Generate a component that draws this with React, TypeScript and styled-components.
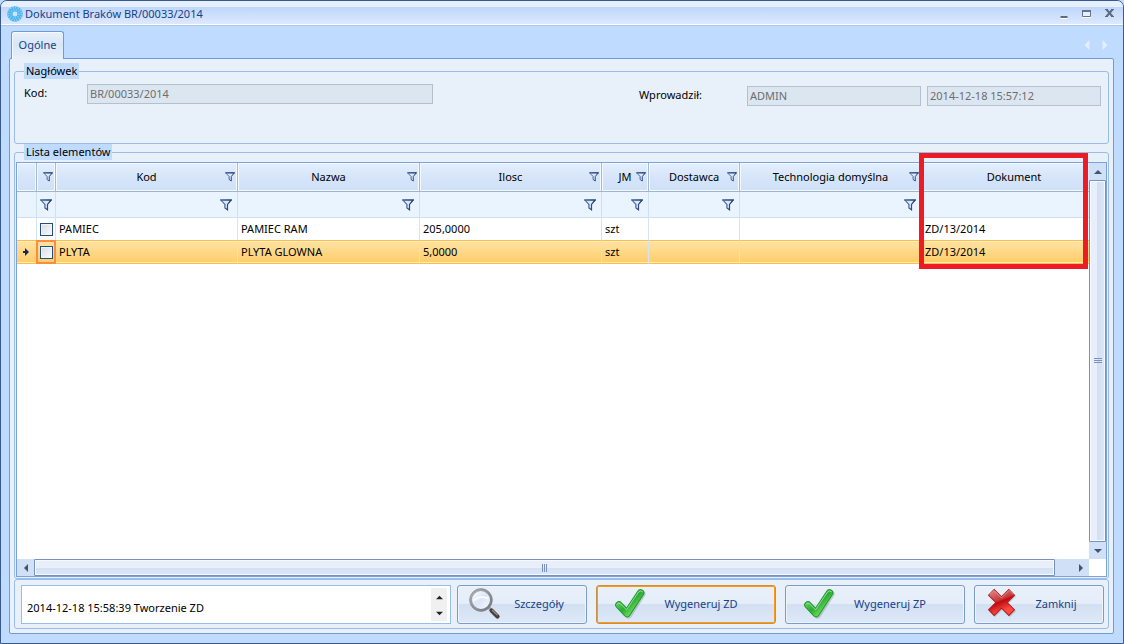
import React from "react";
import styled, { createGlobalStyle } from "styled-components";

const GlobalStyle = createGlobalStyle`
  *, *::before, *::after { box-sizing: border-box; }
  body {
    margin: 0;
    background: #bfdbff;
    color: #000;
    font: 11px/16px "Noto Sans", "Open Sans", sans-serif;
  }
  button, input, textarea { font: inherit; color: inherit; margin: 0; }
  button { padding: 0; border: 0; background: none; }
  svg { display: block; flex: none; }
`;

const Window = styled.div`
  display: flex;
  flex-direction: column;
  min-height: 100vh;
  border: 1px solid #3b5a8c;
  border-radius: 7px 7px 0 0;
  overflow: hidden;
  background: #bfdbff;
`;

const TitleBar = styled.header`
  display: flex;
  align-items: center;
  gap: 2px;
  height: 25px;
  padding: 2px 7px 0 6px;
  border-bottom: 1px solid #a9c7f0;
  box-shadow: inset 0 -1px #fff;
  background: linear-gradient(#e6effc 0 6px, #bfd6fb 6px, #dfeafd 24px);
  color: #15428b;
`;

const Title = styled.h1`
  flex: 1;
  margin: 0;
  font-size: 11px;
  font-weight: 400;
`;

const WindowButtons = styled.div`
  display: flex;
  gap: 11px;
`;

const TabBar = styled.nav`
  display: flex;
  align-items: flex-end;
  justify-content: space-between;
  height: 32px;
  padding: 0 13px 0 10px;
`;

const Tab = styled.button`
  position: relative;
  z-index: 1;
  width: 53px;
  height: 28px;
  margin-bottom: -1px;
  padding-bottom: 2px;
  border: 1px solid #6f9bd8;
  border-bottom: 0;
  border-radius: 3px 3px 0 0;
  background: linear-gradient(#e9f1fb, #d9e6f7 45%, #e8f0fa);
  box-shadow: inset 1px 1px #f6faff;
  color: #15428b;
`;

const TabArrows = styled.div`
  display: flex;
  gap: 8px;
  margin-bottom: 8px;
`;

const Body = styled.main`
  flex: 1;
  display: flex;
  flex-direction: column;
  margin: 0 9px 9px 8px;
  padding: 4px;
  border: 1px solid #6f9bd8;
  border-radius: 2px;
  background: #e8f0fa;
`;

const Group = styled.section<{ $fill?: boolean }>`
  display: flex;
  flex-direction: column;
  flex: ${(p) => (p.$fill ? "1" : "none")};
  min-width: 0;
  margin-top: 8px;
  padding: ${(p) => (p.$fill ? "0 1px 1px" : "0 7px 37px 9px")};
  border: 1px solid #9bbce8;
  border-radius: 3px;
`;

const Legend = styled.h2<{ $inset?: boolean }>`
  align-self: flex-start;
  margin: -9px 0 0 ${(p) => (p.$inset ? "8px" : "0")};
  padding: 0 2px;
  background: #bfdbff;
  font-size: 11px;
  font-weight: 400;
`;

const Fields = styled.div`
  display: flex;
  align-items: flex-start;
  justify-content: space-between;
  gap: 24px;
  margin-top: 5px;
`;

const Field = styled.div<{ $lowered?: boolean }>`
  display: flex;
  align-items: center;
  gap: 6px;
  padding-top: ${(p) => (p.$lowered ? "2px" : "0")};
`;

const Label = styled.label<{ $width: number }>`
  width: ${(p) => p.$width}px;
  padding-bottom: 2px;
`;

const TextBox = styled.input<{ $width: number }>`
  width: ${(p) => p.$width}px;
  height: 20px;
  padding: 0 2px 1px;
  border: 1px solid #b4c0cd;
  border-radius: 0;
  background: #dce6f0;
  color: #6d6d6d;
  outline: none;
`;

const Grid = styled.div`
  position: relative;
  flex: 1;
  display: flex;
  flex-direction: column;
  margin-top: 2px;
  border: 1px solid #7ba2da;
  background: #fff;
`;

const GridRow = styled.div<{ $fill?: boolean }>`
  display: flex;
  flex: ${(p) => (p.$fill ? "1" : "none")};
`;

const Viewport = styled.div`
  flex: 1;
  min-width: 0;
  overflow: hidden;
`;

const Table = styled.table`
  width: calc(100% + 18px);
  table-layout: fixed;
  border-collapse: separate;
  border-spacing: 0;
`;

const HeadCell = styled.th`
  height: 29px;
  padding: 0;
  border-right: 1px solid #a3b9d6;
  border-bottom: 1px solid #9fb4cf;
  background: linear-gradient(#e4effd, #d6e5fa 50%, #cfe0f8);
  box-shadow: inset 1px 1px #f4f9ff, inset -1px -1px #f4f9ff;
  font-weight: 400;
`;

const HeadContent = styled.div`
  display: grid;
  grid-template-columns: 1fr auto 1fr;
  align-items: center;
  padding: 0 2px;

  button { grid-column: 3; justify-self: end; }
  span { grid-column: 2; }
`;

const FilterCell = styled.td`
  height: 26px;
  padding: 0 5px 0 3px;
  border-right: 1px solid #cfdff5;
  border-bottom: 1px solid #cfdff5;
  background: #eaf4ff;
`;

const FilterButton = styled.button`
  display: block;
  margin-left: auto;
`;

const Cell = styled.td<{ $selected?: boolean; $focused?: boolean }>`
  height: ${(p) => (p.$selected ? "24px" : "22px")};
  padding: 0 3px;
  border-right: 1px solid #d5e3f5;
  white-space: nowrap;
  ${(p) =>
    p.$selected &&
    `
    border-top: 1px solid #fdb95a;
    border-bottom: 1px solid #fdb95a;
    background: linear-gradient(#ffe3a4, #ffcd68);
    box-shadow: inset 0 1px #fff0a8, inset 0 -1px #fff0a8;
  `}
  ${(p) =>
    p.$focused &&
    `
    border: 2px solid #ff8c3c;
    border-left-width: 1px;
    box-shadow: -1px 0 #ff8c3c;
    padding: 0 2px;
  `}
`;

const CheckBox = styled.input`
  appearance: none;
  display: block;
  width: 13px;
  height: 13px;
  margin: 0;
  border: 1px solid #1c5180;
  background: linear-gradient(135deg, #d8dce3, #fafbfc);
  box-shadow: inset 0 0 0 1px #f4f4f4;
`;

const Highlight = styled.div`
  position: absolute;
  top: -10px;
  left: 902px;
  right: 18px;
  height: 116px;
  border: 5px solid #ed1c24;
  pointer-events: none;
`;

const VScroll = styled.div`
  display: flex;
  flex-direction: column;
  width: 17px;
  background: #d0e0f6;
`;

const HScroll = styled.div`
  display: flex;
  flex: 1;
  height: 17px;
  background: #d0e0f6;
`;

const ScrollButton = styled.button`
  display: flex;
  align-items: center;
  justify-content: center;
  flex: none;
  width: 17px;
  height: 17px;
`;

const Thumb = styled.div<{ $vertical?: boolean }>`
  display: flex;
  align-items: center;
  justify-content: center;
  flex: 1;
  margin-right: ${(p) => (p.$vertical ? "0" : "17px")};
  border: 1px solid #7793bd;
  border-radius: 1px;
  box-shadow: inset 0 0 0 1px #f5f9ff;
  background: linear-gradient(${(p) => (p.$vertical ? "to right" : "to bottom")}, #e8effa 50%, #d3e0f2 50%, #dde8f7);
`;

const Corner = styled.div`
  width: 17px;
  background: #fff;
`;

const Footer = styled.footer`
  display: flex;
  gap: 9px;
  padding: 5px 4px 4px 6px;
  border: 1px solid #9bbce8;
  border-radius: 3px;
`;

const LogBox = styled.div`
  display: flex;
  flex: 1;
  min-width: 0;
  height: 39px;
  margin-right: -3px;
  border: 1px solid #9bbce8;
  background: #fff;
`;

const LogText = styled.textarea`
  flex: 1;
  min-width: 0;
  padding: 14px 5px 0;
  border: 0;
  outline: none;
  resize: none;
  overflow: hidden;
  background: transparent;
`;

const Spinner = styled.div`
  display: flex;
  flex-direction: column;
  width: 16px;
  margin: 2px 3px 2px 0;
  padding-top: 2px;
  background: #f0f0f0;

  button { flex: 1; display: flex; align-items: center; justify-content: center; }
`;

const ActionButton = styled.button<{ $wide?: boolean; $active?: boolean }>`
  display: flex;
  align-items: center;
  flex: none;
  width: ${(p) => (p.$wide ? "180px" : "130px")};
  height: 39px;
  padding: 0 ${(p) => (p.$wide ? "19px 2px 17px" : "9px 2px 11px")};
  border: 1px solid ${(p) => (p.$active ? "#c98f45" : "#7b9bc8")};
  border-radius: 3px;
  background: linear-gradient(#e9f0fa, #e4edf9 50%, #d2e0f2 50%, #dde9f8);
  box-shadow: inset 0 0 0 1px ${(p) => (p.$active ? "#ff9a10" : "#eef4fc")};
  color: #15428b;

  span { flex: 1; text-align: center; }
`;

const Funnel = ({ size }: { size: number }) => (
  <svg width={size} height={size} viewBox="0 0 12 12">
    <defs>
      <linearGradient id="funnel" x1="0" x2="1">
        <stop offset="0" stopColor="#5f86c0" />
        <stop offset="1" stopColor="#14285c" />
      </linearGradient>
    </defs>
    <path d="M.8 1h10.400L7.500 5.400v5.400L4.900 9V5.400Z" fill="#dbe8fa" stroke="url(#funnel)" strokeWidth="1.200" />
    <path d="M.3 1h11.400" stroke="#2b4a80" strokeWidth="1.200" />
  </svg>
);

const arrows = {
  up: "M0 6 4 2l4 4Z",
  down: "M0 2h8L4 6Z",
  left: "M6 0v8L2 4Z",
  right: "M2 0v8l4-4Z",
};

const Arrow = ({ dir, color = "#44536e", size = 8 }: { dir: keyof typeof arrows; color?: string; size?: number }) => (
  <svg width={size} height={size} viewBox="0 0 8 8">
    <path d={arrows[dir]} fill={color} />
  </svg>
);

const AppIcon = () => (
  <svg width="16" height="16" viewBox="0 0 16 16">
    <circle cx="8" cy="8" r="5" fill="none" stroke="#4db4ec" strokeWidth="5.600" />
    <circle cx="8" cy="8" r="6.600" fill="none" stroke="#9ad8f8" strokeWidth="1.800" strokeDasharray="1 1.600" />
    <circle cx="8" cy="8" r="4" fill="none" stroke="#8ad0f5" strokeWidth="1.800" strokeDasharray="1 1.400" />
    <circle cx="8" cy="8" r="2.400" fill="#d0e4fc" />
  </svg>
);

const Magnifier = () => (
  <svg width="32" height="32" viewBox="0 0 32 32">
    <defs>
      <linearGradient id="lens" x1="0" y1="0" x2="1" y2="1">
        <stop offset="0" stopColor="#fff" />
        <stop offset=".5" stopColor="#dce6fa" />
        <stop offset="1" stopColor="#fbfdff" />
      </linearGradient>
      <linearGradient id="rim" x1="0" y1="0" x2="1" y2="1">
        <stop offset="0" stopColor="#aeb2b8" />
        <stop offset="1" stopColor="#74787e" />
      </linearGradient>
    </defs>
    <path d="m19.500 19.500 3.500 3" stroke="#a9adb2" strokeWidth="3" />
    <path d="m22.500 22.500 6 6" stroke="#47403e" strokeWidth="4.200" strokeLinecap="round" />
    <path d="m23 22 5.500 5.300" stroke="#9a8c86" strokeWidth="1.200" />
    <circle cx="12" cy="12" r="10.200" fill="url(#lens)" stroke="url(#rim)" strokeWidth="2.400" />
    <circle cx="12" cy="12" r="11.400" fill="none" stroke="#7d8288" strokeWidth=".6" />
    <path d="M4.500 12.500q7-6 15-2" fill="none" stroke="#fff" strokeWidth="1.500" />
  </svg>
);

const Check = () => (
  <svg width="32" height="32" viewBox="0 0 32 32" fill="none" strokeLinecap="round" strokeLinejoin="round">
    <defs>
      <linearGradient id="leaf" x1="0" y1="0" x2="1" y2="1">
        <stop offset="0" stopColor="#7fd880" />
        <stop offset=".3" stopColor="#4cc050" />
        <stop offset=".5" stopColor="#2cab36" />
        <stop offset=".8" stopColor="#6edc5c" />
      </linearGradient>
    </defs>
    <path d="m6 18 8.500 9L28 6" stroke="#8a9a95" strokeWidth="7" opacity=".45" />
    <path d="m5 17 8 8.500L26.500 5" stroke="#1c972b" strokeWidth="7.600" />
    <path d="m5 17 8 8.500L26.500 5" stroke="url(#leaf)" strokeWidth="5.600" />
    <path d="M3 16.200q1.500-2 3.500-.4l6 6L24.500 4q2-2 4-.4" stroke="#a6eca0" strokeWidth=".8" />
  </svg>
);

const Cross = () => (
  <svg width="32" height="32" viewBox="0 0 32 32" fill="none">
    <defs>
      <linearGradient id="cross" x1="0" y1="0" x2=".4" y2="1">
        <stop offset="0" stopColor="#dd7676" />
        <stop offset=".45" stopColor="#c8383a" />
        <stop offset=".55" stopColor="#c00a0e" />
        <stop offset="1" stopColor="#fa4a40" />
      </linearGradient>
    </defs>
    <path d="m6 5 21 21m0-21L6 26" stroke="#788" strokeWidth="8.500" opacity=".4" />
    <path d="m5 4 21 21m0-21L5 25" stroke="#ac1b1f" strokeWidth="9" />
    <path d="m5.700 4.700 19.600 19.600m0-19.600L5.700 24.300" stroke="url(#cross)" strokeWidth="7.200" />
    <path d="M3.600 6.600 8 2.400l7.500 7.500L23 2.400l4.400 4.200" stroke="#eda0a0" strokeWidth=".8" />
  </svg>
);

const Grip = ({ vertical }: { vertical?: boolean }) => (
  <svg width="8" height="8" viewBox="0 0 8 8">
    <path d={vertical ? "M0 1.500h8M0 3.500h8M0 5.500h8" : "M1.500 0v8M3.500 0v8M5.500 0v8"} stroke="#7793bd" />
  </svg>
);

const columns = [
  { label: "Kod", width: 182 },
  { label: "Nazwa", width: 182 },
  { label: "Ilosc", width: 182 },
  { label: "JM", width: 47 },
  { label: "Dostawca", width: 91 },
  { label: "Technologia domyślna", width: 182 },
];

const rows = [
  { values: ["PAMIEC", "PAMIEC RAM", "205,0000", "szt", "", "", "ZD/13/2014"], selected: false },
  { values: ["PLYTA", "PLYTA GLOWNA", "5,0000", "szt", "", "", "ZD/13/2014"], selected: true },
];

export default function App() {
  return (
    <>
      <GlobalStyle />
      <Window>
        <TitleBar>
          <AppIcon />
          <Title>Dokument Braków BR/00033/2014</Title>
          <WindowButtons>
            <button aria-label="Minimalizuj">
              <svg width="12" height="12" viewBox="0 0 12 12">
                <path d="M2.500 9h7" stroke="#5b6b80" strokeWidth="2" />
                <path d="M2.500 10.500h7" stroke="#fff" />
              </svg>
            </button>
            <button aria-label="Maksymalizuj">
              <svg width="12" height="12" viewBox="0 0 12 12">
                <path d="M1.500 2.500h8v6h-8Z" fill="#e6effc" stroke="#64748c" />
                <path d="M1 3h9" stroke="#64748c" strokeWidth="2" />
                <path d="M1 9.500h9" stroke="#fff" />
              </svg>
            </button>
            <button aria-label="Zamknij okno">
              <svg width="12" height="12" viewBox="0 0 12 12">
                <path d="m2.500 1.500 6 7m0-7-6 7" stroke="#5b6b80" strokeWidth="2" />
                <path d="M1 1.500h3m3 0h3M1 8.500h3m3 0h3" stroke="#5b6b80" />
              </svg>
            </button>
          </WindowButtons>
        </TitleBar>

        <TabBar>
          <Tab>Ogólne</Tab>
          <TabArrows>
            <button aria-label="Poprzednia karta"><Arrow dir="left" color="#e3eefc" size={10} /></button>
            <button aria-label="Następna karta"><Arrow dir="right" color="#e3eefc" size={10} /></button>
          </TabArrows>
        </TabBar>

        <Body>
          <Group role="group" aria-labelledby="header-group">
            <Legend id="header-group">Nagłówek</Legend>
            <Fields>
              <Field>
                <Label htmlFor="code" $width={57}>Kod:</Label>
                <TextBox id="code" $width={346} readOnly value="BR/00033/2014" />
              </Field>
              <Field $lowered>
                <Label htmlFor="author" $width={102}>Wprowadził:</Label>
                <TextBox id="author" $width={174} readOnly value="ADMIN" />
                <TextBox aria-label="Data wprowadzenia" $width={174} readOnly value="2014-12-18 15:57:12" />
              </Field>
            </Fields>
          </Group>

          <Group $fill role="group" aria-labelledby="list-group">
            <Legend $inset id="list-group">Lista elementów</Legend>
            <Grid>
              <GridRow $fill>
                <Viewport>
                  <Table>
                    <colgroup>
                      <col width="20" />
                      <col width="19" />
                      {columns.map((c) => <col key={c.label} width={c.width} />)}
                      <col />
                    </colgroup>
                    <thead>
                      <tr>
                        <HeadCell />
                        <HeadCell>
                          <HeadContent><button aria-label="Filtruj zaznaczenie"><Funnel size={10} /></button></HeadContent>
                        </HeadCell>
                        {columns.map((c) => (
                          <HeadCell key={c.label}>
                            <HeadContent>
                              <span>{c.label}</span>
                              <button aria-label={`Filtruj ${c.label}`}><Funnel size={10} /></button>
                            </HeadContent>
                          </HeadCell>
                        ))}
                        <HeadCell><HeadContent><span>Dokument</span></HeadContent></HeadCell>
                      </tr>
                    </thead>
                    <tbody>
                      <tr>
                        <FilterCell />
                        <FilterCell>
                          <FilterButton aria-label="Warunek zaznaczenia"><Funnel size={12} /></FilterButton>
                        </FilterCell>
                        {columns.map((c) => (
                          <FilterCell key={c.label}>
                            <FilterButton aria-label={`Warunek ${c.label}`}><Funnel size={12} /></FilterButton>
                          </FilterCell>
                        ))}
                        <FilterCell />
                      </tr>
                      {rows.map((row) => (
                        <tr key={row.values[0]}>
                          <Cell $selected={row.selected}>
                            {row.selected && (
                              <svg width="12" height="10" viewBox="0 0 12 10">
                                <path d="M3 4h2V1l4 4-4 4V6H3Z" fill="#14285c" />
                              </svg>
                            )}
                          </Cell>
                          <Cell $selected={row.selected} $focused={row.selected}>
                            <CheckBox type="checkbox" aria-label={`Zaznacz ${row.values[0]}`} />
                          </Cell>
                          {row.values.map((value, i) => (
                            <Cell key={i} $selected={row.selected}>{value}</Cell>
                          ))}
                        </tr>
                      ))}
                    </tbody>
                  </Table>
                </Viewport>
                <VScroll>
                  <ScrollButton aria-label="W górę"><Arrow dir="up" /></ScrollButton>
                  <Thumb $vertical><Grip vertical /></Thumb>
                  <ScrollButton aria-label="W dół"><Arrow dir="down" /></ScrollButton>
                </VScroll>
              </GridRow>
              <GridRow>
                <HScroll>
                  <ScrollButton aria-label="W lewo"><Arrow dir="left" /></ScrollButton>
                  <Thumb><Grip /></Thumb>
                  <ScrollButton aria-label="W prawo"><Arrow dir="right" /></ScrollButton>
                </HScroll>
                <Corner />
              </GridRow>
              <Highlight />
            </Grid>
          </Group>

          <Footer>
            <LogBox>
              <LogText aria-label="Dziennik" readOnly rows={1} value="2014-12-18 15:58:39 Tworzenie ZD" />
              <Spinner>
                <button aria-label="Poprzedni wpis"><Arrow dir="up" color="#222" size={7} /></button>
                <button aria-label="Następny wpis"><Arrow dir="down" color="#222" size={7} /></button>
              </Spinner>
            </LogBox>
            <ActionButton><Magnifier /><span>Szczegóły</span></ActionButton>
            <ActionButton $wide $active><Check /><span>Wygeneruj ZD</span></ActionButton>
            <ActionButton $wide><Check /><span>Wygeneruj ZP</span></ActionButton>
            <ActionButton><Cross /><span>Zamknij</span></ActionButton>
          </Footer>
        </Body>
      </Window>
    </>
  );
}
